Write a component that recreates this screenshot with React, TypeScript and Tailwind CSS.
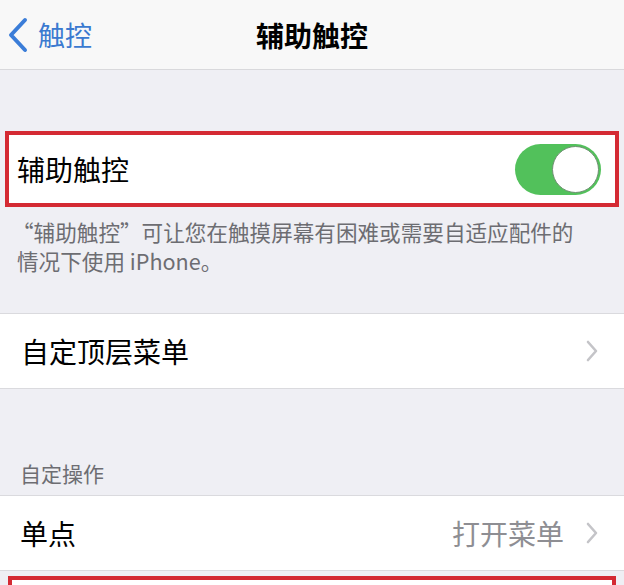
const font = "font-['Noto_Sans_CJK_SC','Noto_Sans',sans-serif]";

function Chevron() {
  return (
    <svg width="14" height="22" viewBox="0 0 14 22" className="shrink-0">
      <polyline
        points="3,2 11,11 3,20"
        fill="none"
        stroke="#c4c4c8"
        strokeWidth="2.6"
        strokeLinecap="round"
        strokeLinejoin="round"
      />
    </svg>
  );
}

function Toggle() {
  return (
    <div className="flex h-[51px] w-[86px] items-center justify-end rounded-full bg-[#52c15b] p-[2px]">
      <div className="h-[47px] w-[47px] rounded-full border border-[#6f8f72] bg-white" />
    </div>
  );
}

function NavBar() {
  return (
    <div className="grid h-[70px] grid-cols-[1fr_auto_1fr] items-center border-b border-[#d9d9dc] bg-[#f8f8f8]">
      <div className="flex items-center gap-[9px] pl-[7px]">
        <svg width="22" height="36" viewBox="0 0 22 36">
          <polyline
            points="18,3 4,18 18,33"
            fill="none"
            stroke="#3b7dd8"
            strokeWidth="4"
            strokeLinecap="round"
            strokeLinejoin="round"
          />
        </svg>
        <span className="text-[27px] leading-none text-[#3b7ad0]">触控</span>
      </div>
      <h1 className="text-[28px] font-bold leading-none text-black">辅助触控</h1>
      <div />
    </div>
  );
}

export default function App() {
  return (
    <div className={`h-[585px] w-[624px] overflow-hidden bg-[#efeff4] ${font}`}>
      <NavBar />

      <div className="h-[61px]" />

      <div className="mx-[5px] flex h-[76px] items-center justify-between border-4 border-[#d42a33] bg-white pl-[8px] pr-[14px]">
        <span className="text-[28px] leading-none text-black">辅助触控</span>
        <Toggle />
      </div>

      <div className="h-[106px] pl-[12px] pr-[10px] pt-[10px] text-[21.6px] leading-[29px] text-[#6d6d72]">
        “辅助触控”可让您在触摸屏幕有困难或需要自适应配件的
        <br />
        <span className="pl-[5px]">情况下使用 iPhone。</span>
      </div>

      <div className="flex h-[76px] items-center justify-between border-y border-[#dadade] bg-white pl-[21px] pr-[25px]">
        <span className="text-[28px] leading-none text-black">自定顶层菜单</span>
        <Chevron />
      </div>

      <div className="flex h-[106px] items-end px-[20px] pb-[11px]">
        <span className="text-[21px] leading-none text-[#6d6d72]">自定操作</span>
      </div>

      <div className="flex h-[76px] items-center justify-between border-y border-[#dadade] bg-white pl-[20px] pr-[25px]">
        <span className="text-[28px] leading-none text-black">单点</span>
        <div className="flex items-center gap-[21px]">
          <span className="text-[28px] leading-none text-[#8e8e93]">打开菜单</span>
          <Chevron />
        </div>
      </div>

      <div className="mx-[8px] mt-[5px] h-[76px] border-4 border-[#d42a33] bg-white" />
    </div>
  );
}
